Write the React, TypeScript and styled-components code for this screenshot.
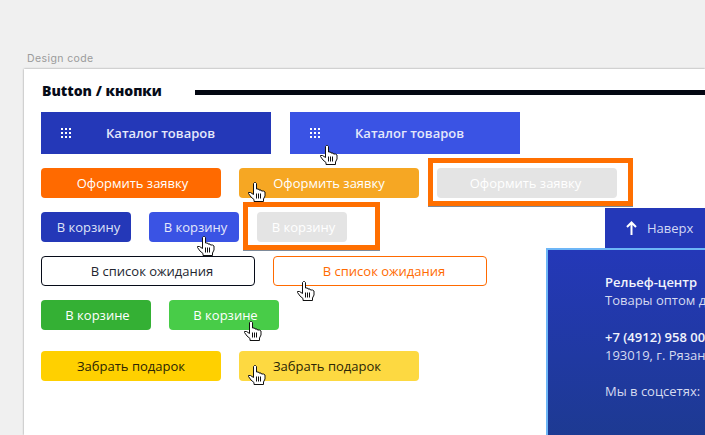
import React, { FC } from 'react';
import styled, { createGlobalStyle } from 'styled-components';

const GlobalStyle = createGlobalStyle`
  html, body {
    margin: 0;
    height: 100%;
    overflow: hidden;
    background: #f0f0f0;
  }
  * {
    box-sizing: border-box;
  }
`;

const Canvas = styled.div`
  width: 705px;
  height: 435px;
  padding: 52px 0 0 24px;
  overflow: hidden;
  font-family: 'Open Sans', 'Liberation Sans', sans-serif;
`;

const FrameLabel = styled.div`
  height: 17px;
  padding-left: 3px;
  font-family: Inter, 'Liberation Sans', sans-serif;
  font-size: 10.5px;
  line-height: 13px;
  letter-spacing: 0.4px;
  color: #9b9b9b;
`;

const Frame = styled.div`
  position: relative;
  width: 681px;
  height: 366px;
  padding: 14px 0 0 17px;
  background: #fff;
  box-shadow: 0 0 2px rgba(0, 0, 0, 0.4);
`;

const Heading = styled.div`
  display: flex;
  align-items: center;
  height: 16px;
  margin-bottom: 13px;
  margin-left: 1px;
`;

const Title = styled.h2`
  width: 153px;
  margin: 0;
  font-size: 14px;
  font-weight: 800;
  line-height: 16px;
  white-space: nowrap;
  color: #060b18;
`;

const Rule = styled.div`
  flex: 1;
  height: 5px;
  margin-top: 2px;
  background: #030712;
`;

const Rows = styled.div`
  display: flex;
  flex-direction: column;
  gap: 14px;
`;

const Row = styled.div<{ $gap?: number; $top?: number }>`
  display: flex;
  gap: ${(p) => p.$gap ?? 18}px;
  margin-top: ${(p) => p.$top ?? 0}px;
`;

const CatalogButton = styled.div<{ $bg: string }>`
  display: flex;
  align-items: center;
  gap: 35px;
  width: 230px;
  height: 42px;
  padding-left: 20px;
  background: ${(p) => p.$bg};
  color: #e4e8fb;
  font-size: 13px;
  font-weight: 600;
  white-space: nowrap;
`;

const Button = styled.div<{
  $w: number;
  $bg?: string;
  $color?: string;
  $border?: string;
  $dx?: number;
}>`
  display: flex;
  align-items: center;
  justify-content: center;
  width: ${(p) => p.$w}px;
  height: 30px;
  padding-left: ${(p) => Math.max(p.$dx ?? 0, 0) * 2}px;
  padding-right: ${(p) => Math.max(-(p.$dx ?? 0), 0) * 2}px;
  border-radius: 4px;
  background: ${(p) => p.$bg ?? '#fff'};
  border: ${(p) => (p.$border ? `1px solid ${p.$border}` : 'none')};
  color: ${(p) => p.$color ?? '#fff'};
  font-size: 13px;
  line-height: 18px;
  white-space: nowrap;
`;

const Highlight = styled.div<{ $l: number; $t: number; $w: number; $h: number }>`
  position: absolute;
  left: ${(p) => p.$l}px;
  top: ${(p) => p.$t}px;
  width: ${(p) => p.$w}px;
  height: ${(p) => p.$h}px;
  border: 5px solid #ff6f00;
  box-shadow: 0 1px 0 #7d8a99;
`;

const UpButton = styled.div`
  position: absolute;
  left: 581px;
  top: 139px;
  display: flex;
  align-items: center;
  gap: 10px;
  width: 120px;
  height: 40px;
  padding-left: 21px;
  background: #2438b8;
  color: #d3d9f5;
  font-size: 13px;
`;

const InfoPanel = styled.div`
  position: absolute;
  left: 522px;
  top: 179px;
  width: 300px;
  height: 220px;
  padding: 23px 0 0 57px;
  border: 2px solid #6db6f7;
  background: linear-gradient(180deg, #2438b8 0%, #1c3a8c 100%);
  color: #d5daf0;
  font-size: 13px;
  line-height: 18px;
  white-space: nowrap;
`;

const InfoBlock = styled.div`
  margin-bottom: 18.5px;
`;

const Strong = styled.div`
  font-weight: 600;
  color: #f1f3fc;
`;

const HandCursor = styled.svg<{ $l: number; $t: number }>`
  position: absolute;
  left: ${(p) => p.$l}px;
  top: ${(p) => p.$t}px;
  width: 18px;
  height: 20px;
`;

const GridIcon: FC = () => (
  <svg width='10' height='10' viewBox='0 0 10 10' fill='#fff'>
    {[0, 4, 8].map((y) =>
      [0, 4, 8].map((x) => <rect key={`${x}-${y}`} x={x} y={y} width='2' height='2' />),
    )}
  </svg>
);

const ArrowIcon: FC = () => (
  <svg width='11' height='14' viewBox='0 0 11 14' fill='none' stroke='#fff' strokeWidth='2'>
    <path d='M5.5 14V2M1 6l4.5-4.500L10 6' />
  </svg>
);

const Hand: FC<{ l: number; t: number }> = ({ l, t }) => (
  <HandCursor $l={l} $t={t} viewBox='0 0 18 20'>
    <path
      d='M5.500 1.500l1-1h1l1 1V7h2l.5 1h2l.5 1h2l1.500 1V14l-1.500 3v2.500H6v-2l-3-2.500-2.500-3.500v-1h2l3 2z'
      fill='#fff'
      stroke='#111'
      strokeWidth='1'
    />
    <path d='M8.500 11.500v5M10.500 11.500v5M12.500 11.500v5' stroke='#111' strokeWidth='1' />
  </HandCursor>
);

const App: FC = () => (
  <Canvas>
    <GlobalStyle />
    <FrameLabel>Design code</FrameLabel>
    <Frame>
      <Heading>
        <Title>Button / кнопки</Title>
        <Rule />
      </Heading>
      <Rows>
        <Row $gap={19}>
          <CatalogButton $bg='#2438b8'>
            <GridIcon />
            Каталог товаров
          </CatalogButton>
          <CatalogButton $bg='#3a53e4'>
            <GridIcon />
            Каталог товаров
          </CatalogButton>
        </Row>
        <Row>
          <Button $w={180} $bg='#ff6a00' $dx={1.5}>Оформить заявку</Button>
          <Button $w={180} $bg='#f6a723'>Оформить заявку</Button>
          <Button $w={180} $bg='#e4e4e4' $dx={-1.5}>Оформить заявку</Button>
        </Row>
        <Row>
          <Button $w={90} $bg='#2438b8' $color='#dfe3f7' $dx={2.5}>В корзину</Button>
          <Button $w={90} $bg='#3a53e4' $color='#e4e8fb' $dx={1.5}>В корзину</Button>
          <Button $w={90} $bg='#e4e4e4' $dx={1.5}>В корзину</Button>
        </Row>
        <Row>
          <Button $w={214} $border='#060b18' $color='#23262f' $dx={4}>В список ожидания</Button>
          <Button $w={214} $border='#ff6a00' $color='#ff6a00' $dx={4}>В список ожидания</Button>
        </Row>
        <Row>
          <Button $w={110} $bg='#34b034' $dx={1.5}>В корзине</Button>
          <Button $w={110} $bg='#48cc48' $dx={1.5}>В корзине</Button>
        </Row>
        <Row $top={7}>
          <Button $w={180} $bg='#ffd000' $color='#2a2405'>Забрать подарок</Button>
          <Button $w={180} $bg='#fdd941' $color='#2a2405' $dx={-2}>Забрать подарок</Button>
        </Row>
      </Rows>

      <Highlight $l={404} $t={89} $w={205} $h={48} />
      <Highlight $l={219} $t={133} $w={137} $h={48} />

      <UpButton>
        <ArrowIcon />
        Наверх
      </UpButton>
      <InfoPanel>
        <InfoBlock>
          <Strong>Рельеф-центр</Strong>
          Товары оптом для садоводов
        </InfoBlock>
        <InfoBlock>
          <Strong>+7 (4912) 958 00 00</Strong>
          193019, г. Рязань
        </InfoBlock>
        Мы в соцсетях:
      </InfoPanel>

      <Hand l={296} t={76} />
      <Hand l={224} t={113} />
      <Hand l={173} t={167} />
      <Hand l={273} t={212} />
      <Hand l={220} t={252} />
      <Hand l={224} t={296} />
    </Frame>
  </Canvas>
);

export default App;
